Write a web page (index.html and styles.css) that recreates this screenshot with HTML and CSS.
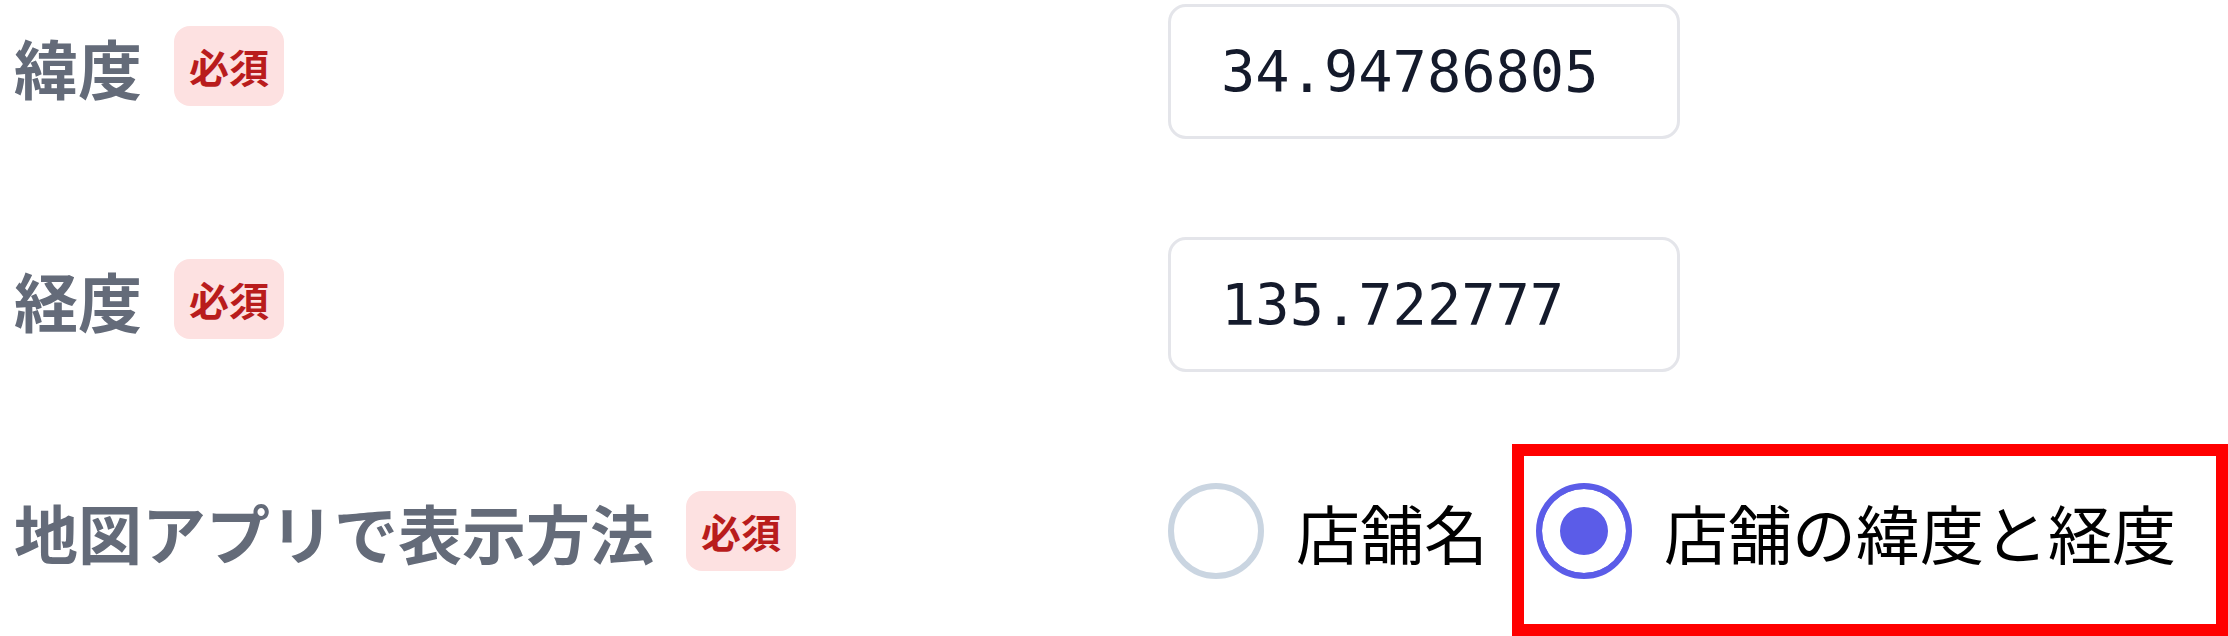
FILE: index.html
```html
<!DOCTYPE html>
<html lang="ja">
<head>
<meta charset="utf-8">
<title>店舗位置</title>
<link rel="stylesheet" href="styles.css">
</head>
<body>
<form class="form">
  <div class="row row-text">
    <div class="label-group">
      <label class="label" for="lat">緯度</label>
      <span class="badge">必須</span>
    </div>
    <input class="text-input" id="lat" type="text" value="34.94786805" readonly>
  </div>
  <div class="row row-text">
    <div class="label-group">
      <label class="label" for="lng">経度</label>
      <span class="badge">必須</span>
    </div>
    <input class="text-input" id="lng" type="text" value="135.722777" readonly>
  </div>
  <div class="row row-radio">
    <div class="label-group label-group-radio">
      <span class="label">地図アプリで表示方法</span>
      <span class="badge">必須</span>
    </div>
    <div class="radio-group">
      <label class="option">
        <input class="radio" type="radio" name="mode" value="name">
        <span class="option-text">店舗名</span>
      </label>
      <label class="option">
        <input class="radio" type="radio" name="mode" value="coords" checked>
        <span class="option-text">店舗の緯度と経度</span>
      </label>
    </div>
  </div>
</form>
<div class="highlight" aria-hidden="true"></div>
</body>
</html>
```

FILE: styles.css
```css
html {
  overflow: hidden;
  background: #ffffff;
}

body {
  position: relative;
  margin: 0;
  padding: 0;
  min-height: 100vh;
  background: #ffffff;
  font-family: "Noto Sans CJK JP", "Noto Sans", sans-serif;
}

.form {
  display: flex;
  flex-direction: column;
  margin: 0;
  padding: 4px 0 0 14px;
}

.row {
  display: grid;
  grid-template-columns: 1154px auto;
  align-items: center;
}

.row-text {
  margin-bottom: 98px;
}

.row-text + .row-radio {
  margin-top: 13px;
}

.label-group {
  display: flex;
  align-items: center;
  gap: 32px;
  padding-bottom: 10px;
}

.label-group-radio {
  padding-bottom: 0;
}

.label {
  font-size: 64px;
  font-weight: 700;
  color: #646b79;
  line-height: 1.45;
}

.badge {
  display: inline-block;
  font-size: 40px;
  font-weight: 700;
  line-height: 60px;
  padding: 10px 15px;
  border-radius: 16px;
  background: #fde1e1;
  color: #b91c1c;
}

.text-input {
  box-sizing: border-box;
  width: 512px;
  height: 135px;
  margin: 0;
  padding: 0 20px 0 50px;
  border: 3px solid #e4e5ea;
  border-radius: 18px;
  background: #ffffff;
  font-family: "DejaVu Sans Mono", "Liberation Mono", monospace;
  font-size: 57px;
  color: #141a2b;
  outline: none;
}

.radio-group {
  display: flex;
  align-items: center;
  gap: 48px;
}

.option {
  display: flex;
  align-items: center;
  gap: 32px;
}

.radio {
  appearance: none;
  -webkit-appearance: none;
  box-sizing: border-box;
  width: 96px;
  height: 96px;
  margin: 0;
  border: 6px solid #cad5e1;
  border-radius: 50%;
  background: #ffffff;
}

.radio:checked {
  border-color: #5b5ce8;
  background: #5b5ce8;
  box-shadow: inset 0 0 0 18px #ffffff;
}

.option-text {
  font-size: 64px;
  font-weight: 400;
  line-height: 1.45;
  color: #000000;
}

.highlight {
  position: absolute;
  right: 0;
  bottom: 0;
  width: 716px;
  height: 192px;
  box-sizing: border-box;
  border: 12px solid #ff0000;
  pointer-events: none;
}
```
